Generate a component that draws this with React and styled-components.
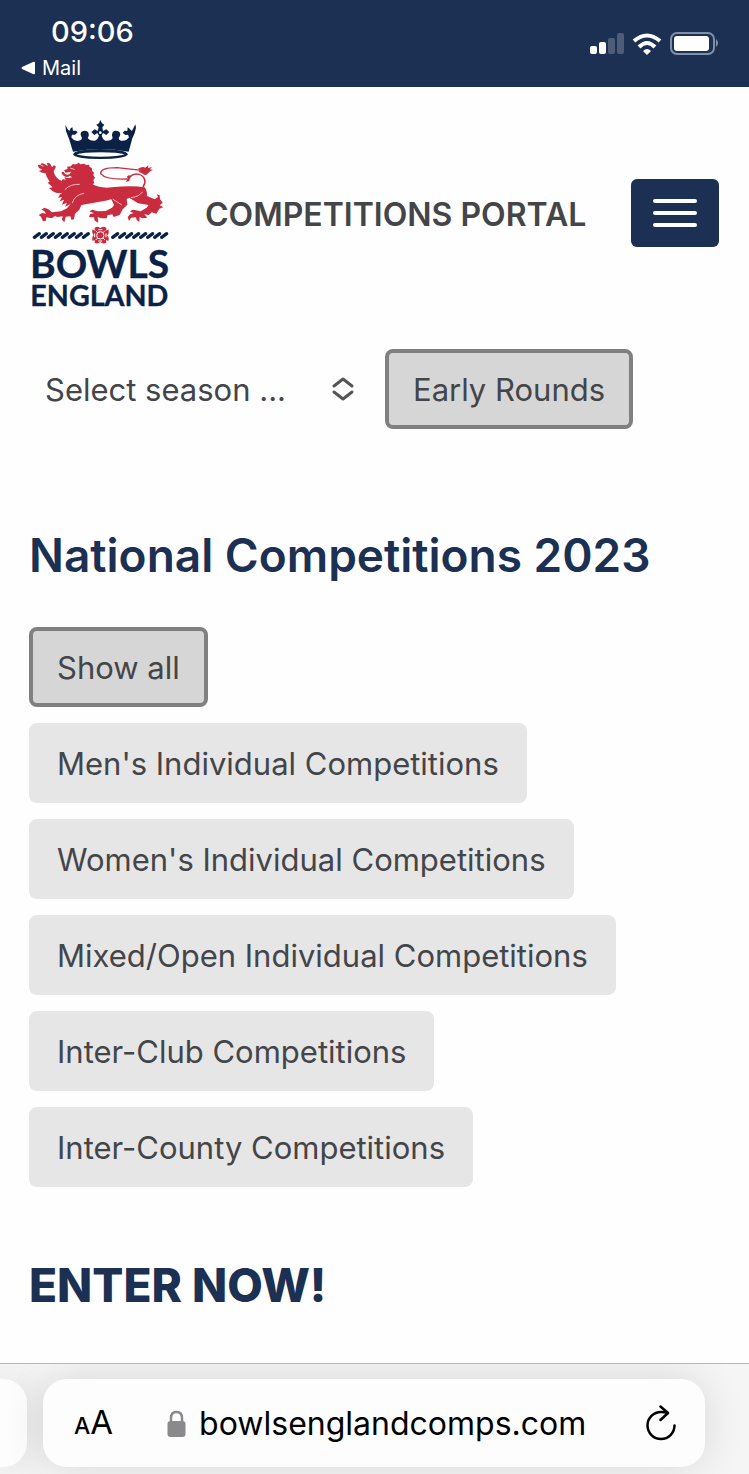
import React, { useState } from "react";
import styled, { createGlobalStyle, css } from "styled-components";

const navy = "#1b3052";
const ink = "#434549";

const GlobalStyle = createGlobalStyle`
  *, *::before, *::after { box-sizing: border-box; }
  body {
    margin: 0;
    background: #fefefe;
    color: ${ink};
    font-family: Inter, "Liberation Sans", sans-serif;
    font-size: 31px;
    line-height: 40px;
  }
  button, input, select { font: inherit; color: inherit; margin: 0; }
`;

const Screen = styled.div`
  display: flex;
  flex-direction: column;
  min-height: 100vh;
`;

const StatusBar = styled.header`
  display: flex;
  justify-content: space-between;
  align-items: flex-start;
  padding: 14px 30px 5px 21px;
  background: ${navy};
  color: #fff;
`;

const ClockColumn = styled.div`
  display: flex;
  flex-direction: column;
  gap: 4px;
`;

const Clock = styled.time`
  padding-left: 30px;
  font-size: 29px;
  font-weight: 500;
  line-height: 36px;
`;

const BackLink = styled.a`
  display: flex;
  align-items: center;
  gap: 7px;
  color: inherit;
  font-size: 20px;
  font-weight: 400;
  line-height: 28px;
  text-decoration: none;
`;

const StatusIcons = styled.div`
  display: flex;
  align-items: center;
  gap: 8px;
  padding-top: 18px;
  svg { display: block; }
`;

const SiteHeader = styled.div`
  display: flex;
  align-items: center;
  padding: 28px 30px 0;
`;

const LogoLink = styled.a`
  flex: none;
  svg { display: block; }
`;

const PortalTitle = styled.p`
  flex: 1;
  margin: 0 0 0 35px;
  font-size: 32px;
  font-weight: 600;
`;

const MenuButton = styled.button`
  display: flex;
  flex-direction: column;
  justify-content: center;
  align-items: center;
  gap: 8px;
  width: 88px;
  height: 68px;
  margin-bottom: 4px;
  border: 0;
  border-radius: 6px;
  background: ${navy};
`;

const MenuLine = styled.span`
  width: 44px;
  height: 4px;
  border-radius: 2px;
  background: #fff;
`;

const Content = styled.main`
  padding: 34px 29px 48px;
`;

const FilterRow = styled.div`
  display: flex;
  gap: 16px;
`;

const SelectWrap = styled.div`
  display: grid;
  align-items: center;
  width: 340px;
  > * { grid-area: 1 / 1; }
  svg { justify-self: end; margin-right: 14px; pointer-events: none; }
`;

const SeasonSelect = styled.select`
  appearance: none;
  width: 100%;
  height: 80px;
  padding: 2px 56px 0 16px;
  border: 0;
  background: transparent;
`;

const FilterButton = styled.button`
  height: 80px;
  padding: 2px 24px 0;
  border: 4px solid #e6e6e6;
  border-radius: 8px;
  background: #e6e6e6;
  white-space: nowrap;
  ${(p) => p.$active && css`
    border-color: #808080;
    background: #d6d6d6;
  `}
`;

const Heading = styled.h2`
  margin: 0;
  color: ${navy};
  font-size: 46px;
  font-weight: ${(p) => (p.$heavy ? 800 : 600)};
  line-height: 56px;
`;

const Section = styled.section`
  margin-top: ${(p) => p.$space}px;
`;

const FilterList = styled.div`
  display: flex;
  flex-direction: column;
  align-items: flex-start;
  gap: 16px;
  margin-top: 44px;
`;

const BrowserBar = styled.footer`
  display: flex;
  gap: 16px;
  margin-top: auto;
  padding: 15px 44px 7px 0;
  border-top: 1px solid #b6b6b8;
  background: #f5f5f5;
  overflow: hidden;
`;

const TabCard = styled.div`
  height: 88px;
  background: #fdfdfd;
  box-shadow: 0 0 40px rgba(0, 0, 0, 0.12);
`;

const PreviousTab = styled(TabCard)`
  flex: none;
  width: 27px;
  border-radius: 0 24px 24px 0;
`;

const AddressCard = styled(TabCard)`
  display: flex;
  flex: 1;
  align-items: center;
  min-width: 0;
  padding: 0 28px 0 31px;
  border-radius: 24px;
  color: #000;
`;

const IconButton = styled.button`
  display: flex;
  align-items: baseline;
  padding: 2px 0 0;
  border: 0;
  background: none;
  svg { display: block; }
`;

const SmallA = styled.span`
  font-size: 23px;
  font-weight: 500;
`;

const LargeA = styled.span`
  font-size: 33px;
`;

const AddressField = styled.label`
  display: flex;
  flex: 1;
  align-items: center;
  gap: 13px;
  min-width: 0;
  margin-left: 54px;
  font-size: 32px;
  svg { flex: none; }
`;

const AddressInput = styled.input`
  flex: 1;
  min-width: 0;
  padding: 2px 0 0;
  border: 0;
  background: none;
  outline: 0;
`;

function BowlsEnglandLogo() {
  const strands = [0, 1, 2, 3, 4, 5, 6, 7];
  return (
    <svg width="140" height="200" viewBox="0 0 420 600" role="img" aria-label="Bowls England">
      <g fill="#0b2145">
        <path d="M106 29 L113 43 L118 48 L122 40 L127 37 L129 47 L138 47 L143 52 L135 59 L126 59 L124 67 Q134 82 151 76 Q159 71 153 63 Q149 51 159 48 Q173 45 176 56 Q178 62 173 68 Q178 78 195 77 Q204 73 207 62 L202 54 L193 60 L184 51 L194 43 L203 48 L206 37 L199 29 L207 25 L211 15 L216 25 L223 29 L217 37 L219 48 L229 43 L238 51 L229 60 L219 54 L215 62 Q218 73 226 77 Q243 79 248 69 Q243 61 248 52 Q254 45 265 49 Q274 54 269 64 Q262 74 273 77 Q288 80 297 67 L294 59 L286 60 L278 53 L284 47 L292 48 L293 37 L299 41 L305 48 L309 42 L316 28 L318 38 L314 55 L307 70 L296 110 Q211 94 129 110 L118 74 L108 48 Z" />
        <path fillRule="evenodd" d="M129 118 Q134 103 211 102 Q288 103 294 118 Q288 132 211 132 Q134 132 129 118 Z M140 118 Q157 125 211 125 Q268 125 284 118 Q266 112 211 112 Q157 112 140 118 Z" />
        <circle cx="211" cy="53" r="4" fill="#fff" />
      </g>
      <g transform="translate(0 120)" fill="#c92c3e">
        <path d="M23 31 Q30 27 36 34 L43 34 L32 29 Q34 22 43 27 L54 33 L50 25 Q57 22 61 27 L66 37 L72 31 Q80 33 76 39 L71 49 Q74 65 86 73 L95 78 L99 72 L107 75 L103 66 Q112 72 126 67 L120 62 Q110 70 102 63 L95 56 Q93 49 101 51 Q106 62 118 58 L124 50 L107 53 L102 46 L113 41 L111 35 L123 34 L127 28 L140 28 L146 23 L151 28 L163 26 L168 30 L177 29 L179 36 L186 40 L186 47 L192 53 L190 61 L195 68 L190 75 L193 84 L188 88 Q212 101 245 97 Q305 91 344 97 Q352 107 351 123 L374 133 L384 126 L380 118 L389 121 L390 132 L398 143 L389 151 L400 157 L388 161 L379 176 L365 172 L356 180 L343 178 L352 188 L337 190 L329 186 L328 201 L320 195 L318 187 L303 188 L297 198 L293 187 L300 178 L311 174 L300 170 Q307 161 318 166 L332 169 L350 158 L356 150 L324 145 L298 128 L290 132 L292 149 L278 163 L269 180 L251 186 L247 178 L232 181 L231 190 L213 190 L203 186 L205 203 L194 197 L192 187 L177 187 L180 177 L192 175 L178 169 L187 164 L203 169 L227 168 L246 158 L252 150 L244 133 L226 137 L184 145 L154 150 L148 164 L135 176 L132 192 L125 195 L121 184 L107 185 L103 202 L96 194 L98 184 L82 186 L75 183 L65 190 L49 187 L47 198 L39 199 L33 185 L26 180 L37 174 L48 176 L43 168 L34 164 L43 158 L55 163 L66 172 L93 169 L111 160 L122 147 L105 155 L111 143 L96 149 L102 134 L89 139 L96 126 L84 128 L91 117 L98 113 Q77 118 63 104 L57 99 L68 97 L58 88 L53 83 L59 80 L50 65 L47 55 L36 53 L27 48 L37 44 L27 39 Z" />
        <path d="M337 94 Q347 79 338 67 Q331 56 314 60 Q299 64 298 78 L287 81 Q295 72 291 64 Q305 56 297 64 Q316 48 336 60 Q356 72 341 98 Z" />
        <path d="M292 72 Q227 75 212 56 Q211 38 261 38 L336 46" fill="none" stroke="#c92c3e" strokeWidth="4" />
        <path d="M323 42 Q337 33 346 38 L355 31 L354 39 L367 36 L359 43 L369 44 Q360 47 353 56 Q345 64 336 55 L325 50 L332 46 Z" />
        <g fill="none" stroke="#fff" strokeWidth="2" strokeLinecap="round">
          <path d="M105 103 Q123 86 148 88" />
          <path d="M127 143 Q135 119 161 115" />
          <path d="M249 133 L274 149 M304 128 Q329 125 337 111" />
          <path d="M122 40 L133 43" />
        </g>
      </g>
      <g transform="translate(0 330)">
        <g stroke="#0b2145" strokeWidth="10" strokeLinecap="round">
          {strands.map((i) => (
            <path key={i} d={`M${13 + i * 21} 37 l15 -11`} />
          ))}
          {strands.map((i) => (
            <path key={i} d={`M${248 + i * 21} 37 l15 -11`} />
          ))}
        </g>
        <path fill="#c92c3e" d="M194 8 Q205 2 211 10 Q217 2 229 8 L229 17 L235 13 Q239 27 231 31 Q239 38 235 48 L228 45 L229 54 Q217 58 211 51 Q204 58 194 54 L194 45 L188 48 Q184 37 191 31 Q184 23 188 13 L194 17 Z" />
        <g fill="none" stroke="#fff" strokeWidth="3">
          <circle cx="211" cy="31" r="11" />
          <path d="M197 17 L203 23 M225 17 L219 23 M197 45 L203 39 M225 45 L219 39 M205 14 H217 M205 48 H217 M194 25 V37 M228 25 V37" />
        </g>
      </g>
      <g fill="#0b2145" stroke="#0b2145" strokeWidth="1" fontFamily='Lato, "Open Sans", sans-serif' fontWeight="700">
        <text x="0" y="488" fontSize="117">BOWLS</text>
        <text x="1" y="573" fontSize="86">ENGLAND</text>
      </g>
    </svg>
  );
}

function SignalIcon() {
  return (
    <svg width="34" height="22" viewBox="0 0 34 22" fill="#fff" aria-hidden="true">
      <rect x="0" y="13" width="7" height="8" rx="2" />
      <rect x="9" y="9" width="7" height="12" rx="2" />
      <rect x="18" y="5" width="7" height="16" rx="2" opacity=".22" />
      <rect x="27" y="0" width="7" height="21" rx="2" opacity=".22" />
    </svg>
  );
}

function WifiIcon() {
  return (
    <svg width="30" height="22" viewBox="0 0 30 22" aria-hidden="true">
      <g fill="none" stroke="#fff" strokeWidth="4">
        <path d="M2 8 Q15 -3 28 8" />
        <path d="M7 14 Q15 6 23 14" />
      </g>
      <path d="M15 22 L11 18 Q15 14 19 18 Z" fill="#fff" />
    </svg>
  );
}

function BatteryIcon() {
  return (
    <svg width="49" height="24" viewBox="0 0 49 24" aria-hidden="true">
      <rect x="1" y="1" width="43" height="21" rx="6" fill="none" stroke="#8090a6" strokeWidth="2" />
      <rect x="4" y="4" width="35" height="15" rx="3" fill="#fff" />
      <path d="M46 7 Q50 11 46 15 Z" fill="#8995a9" />
    </svg>
  );
}

function UpDownIcon() {
  return (
    <svg width="24" height="26" viewBox="0 0 24 26" fill="none" stroke="#555" strokeWidth="3" strokeLinecap="round" strokeLinejoin="round" aria-hidden="true">
      <path d="M3 10 L12 3 L21 10 M3 16 L12 23 L21 16" />
    </svg>
  );
}

function LockIcon() {
  return (
    <svg width="19" height="27" viewBox="0 0 38 54" aria-hidden="true">
      <path d="M8 26 V16 Q8 4 19 4 Q30 4 30 16 V26" fill="none" stroke="#8a8a8e" strokeWidth="5" />
      <rect x="1" y="22" width="36" height="32" rx="6" fill="#8a8a8e" />
    </svg>
  );
}

function ReloadIcon() {
  return (
    <svg width="32" height="38" viewBox="0 0 64 76" fill="none" stroke="#000" strokeWidth="5" strokeLinecap="round" strokeLinejoin="round" aria-hidden="true">
      <path d="M59 41 A27 27 0 1 1 32 14 Q40 14 45 16" />
      <path d="M31 3 L46 16 L31 30" />
    </svg>
  );
}

const categories = [
  "Show all",
  "Men's Individual Competitions",
  "Women's Individual Competitions",
  "Mixed/Open Individual Competitions",
  "Inter-Club Competitions",
  "Inter-County Competitions",
];

export default function App() {
  const [category, setCategory] = useState(categories[0]);
  return (
    <Screen>
      <GlobalStyle />
      <StatusBar>
        <ClockColumn>
          <Clock>09:06</Clock>
          <BackLink href="#mail">
            <svg width="14" height="14" viewBox="0 0 14 14" fill="#fff" aria-hidden="true">
              <path d="M1 6 L12 1 Q14 0 14 2 V12 Q14 14 12 13 L1 8 Q0 7 1 6 Z" />
            </svg>
            Mail
          </BackLink>
        </ClockColumn>
        <StatusIcons>
          <SignalIcon />
          <WifiIcon />
          <BatteryIcon />
        </StatusIcons>
      </StatusBar>
      <SiteHeader>
        <LogoLink href="#home"><BowlsEnglandLogo /></LogoLink>
        <PortalTitle>COMPETITIONS PORTAL</PortalTitle>
        <MenuButton aria-label="Menu">
          <MenuLine /><MenuLine /><MenuLine />
        </MenuButton>
      </SiteHeader>
      <Content>
        <FilterRow>
          <SelectWrap>
            <SeasonSelect aria-label="Season">
              <option>Select season ...</option>
            </SeasonSelect>
            <UpDownIcon />
          </SelectWrap>
          <FilterButton $active>Early Rounds</FilterButton>
        </FilterRow>
        <Section $space={98}>
          <Heading>National Competitions 2023</Heading>
          <FilterList>
            {categories.map((name) => (
              <FilterButton key={name} $active={name === category} onClick={() => setCategory(name)}>
                {name}
              </FilterButton>
            ))}
          </FilterList>
        </Section>
        <Section $space={70}>
          <Heading $heavy>ENTER NOW!</Heading>
        </Section>
      </Content>
      <BrowserBar>
        <PreviousTab />
        <AddressCard>
          <IconButton aria-label="Page settings">
            <SmallA>A</SmallA>
            <LargeA>A</LargeA>
          </IconButton>
          <AddressField>
            <LockIcon />
            <AddressInput type="text" aria-label="Address" defaultValue="bowlsenglandcomps.com" />
          </AddressField>
          <IconButton aria-label="Reload"><ReloadIcon /></IconButton>
        </AddressCard>
      </BrowserBar>
    </Screen>
  );
}
